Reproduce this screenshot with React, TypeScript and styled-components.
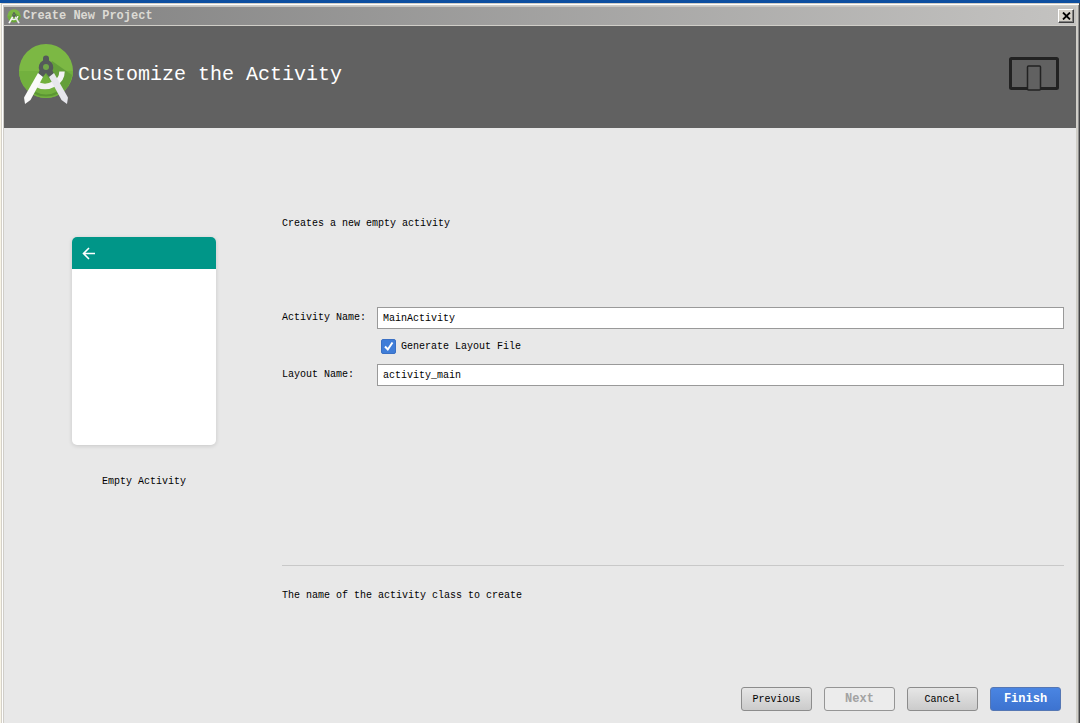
import React from "react";
import styled, { createGlobalStyle, css } from "styled-components";

const GlobalStyle = createGlobalStyle`
  *, *::before, *::after { box-sizing: border-box; }
  html, body { margin: 0; }
  body, button, input { font-family: "Liberation Mono", "Noto Sans CJK SC", monospace; }
  body { font-size: 10px; line-height: 16px; color: #000; background: #d4d0c8; }
`;

const Desktop = styled.div`
  min-height: 100vh;
  display: flex;
  flex-direction: column;
  border-top: 3px solid #0e4fa0;
`;

const Dialog = styled.div`
  flex: 1;
  display: flex;
  flex-direction: column;
  padding: 2px 3px 0 2px;
  background: #d0cec8;
  border-left: 1px solid #f8f4e6;
  border-right: 1px solid #444;
  box-shadow: inset 1px 1px 0 #d4d0c8, inset 2px 2px 0 #fff, inset -1px 0 0 #8e8e8e;
`;

const TitleBar = styled.header`
  display: flex;
  align-items: center;
  gap: 2px;
  height: 19px;
  margin: 1px 0 1px 1px;
  padding: 0 2px 0 3px;
  background: linear-gradient(to right, #808080, #c4c3c1);
  border-top: 1px solid #c8c6c2;
`;

const TitleText = styled.span`
  flex: 1;
  font-size: 12px;
  font-weight: bold;
  color: #dcdad4;
`;

const CloseButton = styled.button`
  display: grid;
  place-items: center;
  width: 16px;
  height: 14px;
  padding: 0;
  background: #d4d0c8;
  border: 1px solid;
  border-color: #fff #404040 #404040 #fff;
  box-shadow: inset -1px -1px 0 #808080;
`;

const Banner = styled.div`
  display: flex;
  align-items: center;
  height: 102px;
  margin-left: 1px;
  padding: 0 17px 0 14px;
  background: #616161;
`;

const Heading = styled.h1`
  flex: 1;
  margin: 0 0 4px 4px;
  font-size: 20px;
  font-weight: normal;
  line-height: 24px;
  color: #fff;
`;

const BannerLogo = styled.span`
  display: flex;
  margin-bottom: 6px;
`;

const Page = styled.main`
  flex: 1;
  display: flex;
  flex-direction: column;
  margin-left: 1px;
  background: #e8e8e8;
`;

const Columns = styled.div`
  flex: 1;
  display: flex;
  gap: 66px;
  padding: 0 12px 0 68px;
`;

const Preview = styled.figure`
  flex: none;
  width: 144px;
  margin: 109px 0 0;
`;

const Phone = styled.div`
  height: 208px;
  overflow: hidden;
  background: #fff;
  border-radius: 5px;
  box-shadow: 0 1px 4px rgba(0, 0, 0, 0.14);
`;

const PhoneBar = styled.div`
  display: flex;
  align-items: center;
  height: 32px;
  padding-left: 10px;
  background: #009688;
`;

const Caption = styled.figcaption`
  margin-top: 29px;
  text-align: center;
`;

const Details = styled.section`
  flex: 1;
  min-width: 0;
  display: flex;
  flex-direction: column;
  padding-top: 88px;
`;

const Text = styled.p`
  margin: 0;
`;

const Form = styled.div`
  display: grid;
  grid-template-columns: 95px 1fr;
  row-gap: 7px;
  align-items: center;
  margin-top: 75px;
`;

const TextField = styled.input`
  width: 100%;
  height: 22px;
  padding: 0 5px;
  font-size: 10px;
  color: #000;
  background: #fff;
  border: 1px solid #999;
  border-radius: 0;
  outline: none;
`;

const CheckRow = styled.label`
  grid-column: 2;
  display: flex;
  align-items: center;
  gap: 5px;
  height: 21px;
  padding-left: 4px;
`;

const CheckBox = styled.span`
  display: grid;
  width: 15px;
  height: 15px;

  > * { grid-area: 1 / 1; }
  > svg { pointer-events: none; }
`;

const CheckInput = styled.input`
  appearance: none;
  width: 15px;
  height: 15px;
  margin: 0;
  background: #fff;
  border: 1px solid #3a70c4;
  border-radius: 2px;

  &:checked { background: #3f7dd8; }
  &:not(:checked) + svg { visibility: hidden; }
`;

const Divider = styled.hr`
  width: 100%;
  height: 1px;
  margin: auto 0 22px;
  border: 0;
  background: #c8c8c8;
`;

const Actions = styled.footer`
  display: flex;
  justify-content: flex-end;
  gap: 12px;
  padding: 83px 15px 12px;
`;

const ActionButton = styled.button<{ $primary?: boolean }>`
  width: 71px;
  height: 24px;
  padding: 0;
  font-size: 10px;
  color: #000;
  background: linear-gradient(#e6e6e6, #cbcbcb);
  border: 1px solid #8c8c8c;
  border-radius: 3px;

  &:disabled {
    font-size: 12px;
    font-weight: bold;
    color: #a2a2a2;
    background: #ececec;
    border-color: #959595;
  }

  ${(p) =>
    p.$primary &&
    css`
      font-size: 12px;
      font-weight: bold;
      color: #fff;
      background: linear-gradient(#4a85e2, #3d73d0);
      border-color: #5577b4;
    `}
`;

const StudioLogo = ({ width, height }: { width: number; height: number }) => (
  <svg width={width} height={height} viewBox="0 0 56 62" aria-hidden="true">
    <circle cx="28" cy="28" r="27" fill="#7cb844" />
    <path d="M1 28a27 27 0 0 0 54 0z" fill="#72b03e" />
    <path d="M34 18l20 14a27 27 0 0 1-12 19L28 32z" fill="#649f3a" />
    <path d="M15 49q13 7 26 0" fill="none" stroke="#5c9634" strokeWidth="2" />
    <path d="M28 12.5a3 3 0 0 1 3 3v2a7.500 7.500 0 0 1 3.500 10L36 31l-4 4-4-5-4 5-4-4 1.500-3.500a7.500 7.500 0 0 1 3.500-10v-2a3 3 0 0 1 3-3z" fill="#54595a" />
    <circle cx="28" cy="24" r="3" fill="#70a548" />
    <path d="M18 41q9 5 18 0 8-4 8-12.500" fill="none" stroke="#f2f2f4" strokeWidth="5.500" />
    <path d="M20 30l5 4-12.500 23L7 61l-1-6.500z" fill="#fafafa" />
    <path d="M36 30l-5 4 12.500 23 5.500 4 1-6.500z" fill="#e6e6ec" />
  </svg>
);

const DevicesIcon = () => (
  <svg width="50" height="34" viewBox="0 0 50 34" aria-hidden="true">
    <rect x="1.500" y="1.500" width="47" height="30" rx="1" fill="none" stroke="#222" strokeWidth="3" />
    <rect x="18.500" y="9" width="13" height="24" rx="1" fill="#616161" stroke="#222" strokeWidth="1.500" />
  </svg>
);

export default function App() {
  return (
    <Desktop>
      <GlobalStyle />
      <Dialog role="dialog" aria-label="Create New Project">
        <TitleBar>
          <StudioLogo width={14} height={15} />
          <TitleText>Create New Project</TitleText>
          <CloseButton type="button" aria-label="Close">
            <svg width="9" height="8" viewBox="0 0 9 8" aria-hidden="true">
              <path d="M1 0.5l7 7M8 0.5l-7 7" stroke="#000" strokeWidth="1.8" />
            </svg>
          </CloseButton>
        </TitleBar>
        <Banner>
          <BannerLogo>
            <StudioLogo width={56} height={62} />
          </BannerLogo>
          <Heading>Customize the Activity</Heading>
          <BannerLogo>
            <DevicesIcon />
          </BannerLogo>
        </Banner>
        <Page>
          <Columns>
            <Preview>
              <Phone>
                <PhoneBar>
                  <svg width="13" height="13" viewBox="0 0 13 13" aria-hidden="true">
                    <path d="M13 6.5H1.5M7 1L1.5 6.5 7 12" fill="none" stroke="#fff" strokeWidth="1.6" />
                  </svg>
                </PhoneBar>
              </Phone>
              <Caption>Empty Activity</Caption>
            </Preview>
            <Details>
              <Text>Creates a new empty activity</Text>
              <Form>
                <label htmlFor="activity-name">Activity Name:</label>
                <TextField id="activity-name" type="text" defaultValue="MainActivity" />
                <CheckRow>
                  <CheckBox>
                    <CheckInput type="checkbox" defaultChecked />
                    <svg width="15" height="15" viewBox="0 0 15 15" aria-hidden="true">
                      <path d="M4 7.5l2.8 3L11.5 3.5" fill="none" stroke="#fff" strokeWidth="2" />
                    </svg>
                  </CheckBox>
                  Generate Layout File
                </CheckRow>
                <label htmlFor="layout-name">Layout Name:</label>
                <TextField id="layout-name" type="text" defaultValue="activity_main" />
              </Form>
              <Divider />
              <Text>The name of the activity class to create</Text>
            </Details>
          </Columns>
          <Actions>
            <ActionButton type="button">Previous</ActionButton>
            <ActionButton type="button" disabled>Next</ActionButton>
            <ActionButton type="button">Cancel</ActionButton>
            <ActionButton type="button" $primary>Finish</ActionButton>
          </Actions>
        </Page>
      </Dialog>
    </Desktop>
  );
}
